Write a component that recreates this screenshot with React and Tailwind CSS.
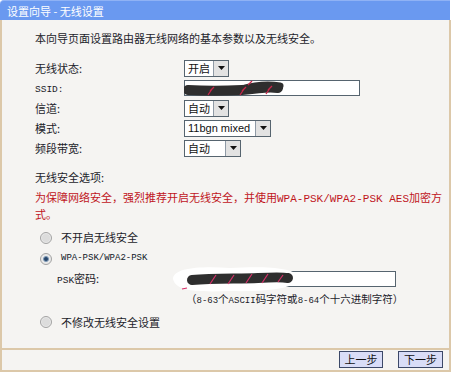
import React from "react";

const cjk = "font-['Noto_Sans_CJK_SC',sans-serif]";
const mono = "font-['Liberation_Mono','Noto_Sans_CJK_SC',monospace]";

function Arrow() {
  return (
    <div className="w-[15px] h-full flex items-center justify-center bg-[#e2e2e2] border-l border-[#8f9aa6]">
      <svg width="7" height="4" viewBox="0 0 7 4">
        <path d="M0 0H7L3.5 4Z" fill="#111" />
      </svg>
    </div>
  );
}

function Select({ className, textClass, children }) {
  return (
    <div className={`flex h-[17px] border border-[#56646f] bg-white ${className}`}>
      <div className={`flex-1 pl-[3px] leading-[15px] text-[#111] ${textClass}`}>{children}</div>
      <Arrow />
    </div>
  );
}

function Row({ label, children }) {
  return (
    <div className="flex h-[20px] items-center">
      <div className="w-[149px] text-[11px] leading-[16px] text-[#1c1c2a]">{label}</div>
      {children}
    </div>
  );
}

function Radio({ checked }) {
  return (
    <div className="w-[12px] h-[12px] rounded-full border border-[#a3a3a3] bg-[#e9e9e9] flex items-center justify-center">
      {checked ? (
        <div className="w-[6px] h-[6px] rounded-full bg-[#27466a] border border-[#7f9bb9]" />
      ) : (
        <div className="w-[8px] h-[8px] rounded-full bg-[#dcdcdc]" />
      )}
    </div>
  );
}

export default function App() {
  return (
    <div className={`w-[458px] h-[374px] bg-white ${cjk}`}>
      <div className="w-[451px] h-[372px] flex flex-col">
        <div className="w-[450px] h-[20px] rounded-tl-[4px] bg-[#6a99f0] text-white text-[11px] leading-[20px] pl-[7px] border-t border-[#8fb2f5]">
          设置向导 - 无线设置
        </div>
        <div className="flex-1 bg-[#f5f4f2] border-x-2 border-[#dcc8a9] pl-[33px] pt-[10px] text-[#1c1c2a]">
          <div className="text-[11px] leading-[16px]">本向导页面设置路由器无线网络的基本参数以及无线安全。</div>
          <div className="mt-[12px]">
            <Row label="无线状态:">
              <Select className="w-[45px]" textClass="text-[11px]">开启</Select>
            </Row>
            <Row label={<span className={`${mono} text-[9.5px]`}>SSID:</span>}>
              <div className="relative w-[176px] h-[16px] border border-[#56646f] bg-white">
                <svg className="absolute left-[-1px] top-[-1px]" width="110" height="18" viewBox="0 0 110 18">
                  <path d="M4 10 C20 11 40 11 58 10 S82 6 94 8" stroke="#2e2e2e" strokeWidth="10" strokeLinecap="round" fill="none" />
                  <path d="M58 9 Q78 3 96 6" stroke="#2e2e2e" strokeWidth="7" strokeLinecap="round" fill="none" />
                  <path d="M24 15 L28 9 L26 11 L30 7" stroke="#c8264a" strokeWidth="1.3" fill="none" />
                  <path d="M56 15 L60 9 L58 11 L62 7" stroke="#c8264a" strokeWidth="1.3" fill="none" />
                  <path d="M64 5 L68 1" stroke="#c8264a" strokeWidth="1.3" fill="none" />
                  <path d="M82 14 L86 8 L84 10 L88 6" stroke="#c8264a" strokeWidth="1.3" fill="none" />
                </svg>
              </div>
            </Row>
            <Row label="信道:">
              <Select className="w-[45px]" textClass="text-[11px]">自动</Select>
            </Row>
            <Row label="模式:">
              <Select className="w-[87px]" textClass="text-[11px] font-['Liberation_Sans',sans-serif]">11bgn mixed</Select>
            </Row>
            <Row label="频段带宽:">
              <Select className="w-[57px]" textClass="text-[11px]">自动</Select>
            </Row>
          </div>
          <div className="mt-[11px] text-[11px] leading-[16px]">无线安全选项:</div>
          <div className="mt-[5px] text-[11px] leading-[15px] text-[#c0141c]">
            为保障网络安全，强烈推荐开启无线安全，并使用<span className={mono}>WPA-PSK/WPA2-PSK AES</span>加密方
            <br />
            式。
          </div>
          <div className="mt-[5px] flex h-[21px] items-center pl-[5px] gap-[9px]">
            <Radio />
            <span className="text-[11px]">不开启无线安全</span>
          </div>
          <div className="flex h-[21px] items-center pl-[5px] gap-[9px]">
            <Radio checked />
            <span className={`${mono} text-[9px] text-[#101828]`}>WPA-PSK/WPA2-PSK</span>
          </div>
          <div className="flex h-[20px] items-center pl-[22px]">
            <div className="w-[127px] text-[11px]">
              <span className={`${mono} text-[9.5px]`}>PSK</span>密码:
            </div>
            <div className="relative w-[212px] h-[16px] border border-[#56646f] bg-white">
              <svg className="absolute left-[-15px] top-[-8px]" width="132" height="32" viewBox="0 0 132 32">
                <path d="M3 15 C3 4 30 2 60 4 C92 2 126 3 128 13 C130 24 100 28 60 27 C30 28 6 28 3 15 Z" fill="#ffffff" />
                <path d="M22 16 C45 14 70 15 88 14 S112 13 118 14" stroke="#2e2e2e" strokeWidth="10" strokeLinecap="round" fill="none" />
                <path d="M40 20 L46 11" stroke="#d8306a" strokeWidth="1.2" />
                <path d="M58 20 L64 11" stroke="#d8306a" strokeWidth="1.2" />
                <path d="M76 19 L82 10" stroke="#d8306a" strokeWidth="1.2" />
                <path d="M92 19 L98 10" stroke="#d8306a" strokeWidth="1.2" />
                <path d="M108 18 L113 11" stroke="#d8306a" strokeWidth="1.2" />
                <path d="M12 25 L17 24" stroke="#d8306a" strokeWidth="1.2" />
              </svg>
            </div>
          </div>
          <div className="mt-[2px] pl-[151px] text-[10.5px] leading-[16px]">
            （<span className={`${mono} text-[9px]`}>8-63</span>个<span className={`${mono} text-[9px]`}>ASCII</span>码字符或<span className={`${mono} text-[9px]`}>8-64</span>个十六进制字符）
          </div>
          <div className="mt-[3px] flex h-[20px] items-center pl-[5px] gap-[9px]">
            <Radio />
            <span className="text-[11px]">不修改无线安全设置</span>
          </div>
        </div>
        <div className="h-[24px] bg-[#f5f4f2] border-x-2 border-t-2 border-b-2 border-[#dcc8a9] flex justify-end items-start pt-[1px] pr-[6px] gap-[15px]">
          <button className="w-[44px] h-[17px] bg-[#d9ddf7] border border-[#3c4868] text-[11px] leading-[15px] text-[#111]">上一步</button>
          <button className="w-[45px] h-[17px] bg-[#d9ddf7] border border-[#3c4868] text-[11px] leading-[15px] text-[#111]">下一步</button>
        </div>
      </div>
    </div>
  );
}
